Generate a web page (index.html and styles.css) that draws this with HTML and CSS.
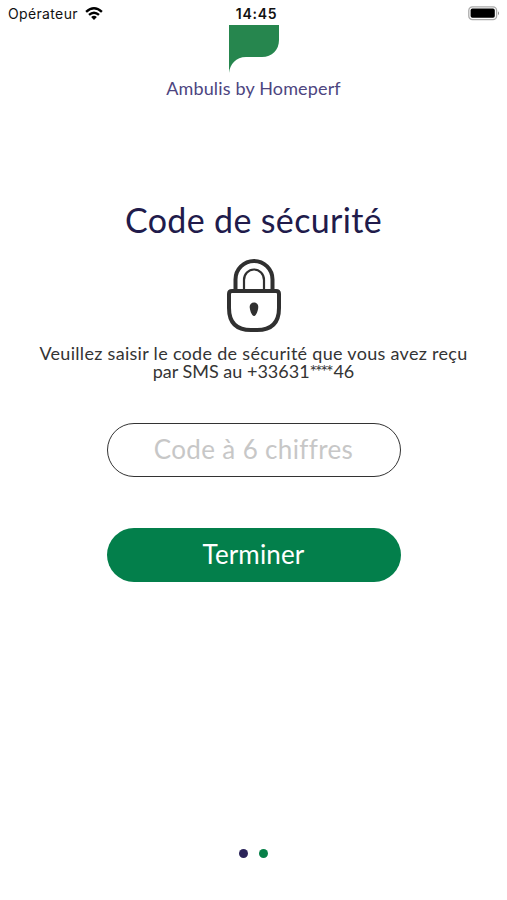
FILE: index.html
```html
<!DOCTYPE html>
<html lang="fr">
<head>
<meta charset="utf-8">
<title>Code de sécurité</title>
<link rel="stylesheet" href="styles.css">
</head>
<body>
<div class="screen">
  <header class="status">
    <div class="carrier"><span class="carrier-name">Opérateur</span>
      <svg class="wifi" viewBox="0 0 18 13" width="18" height="13"><g fill="none" stroke="#000" stroke-width="2.4"><path d="M1.1 4.9Q9-2.3 16.9 4.9"/><path d="M4 7.9Q9 3.5 14 7.9"/></g><path d="M6.1 10Q9 7.6 11.9 10L9 12.9Z"/></svg>
    </div>
    <time class="clock">14:45</time>
    <svg class="battery" viewBox="0 0 32 15" width="32" height="15"><rect x=".8" y=".8" width="27.8" height="12.8" rx="3.6" fill="#fff" stroke="#aaa" stroke-width="1.3"/><rect x="2.6" y="2.6" width="24.2" height="9.2" rx="1.8"/><path d="M30 5.2Q32 7.2 30 9.2Z" fill="#888"/></svg>
  </header>
  <main class="content">
    <svg class="logo" viewBox="0 0 50 48" width="50" height="48"><path d="M0 0H50V15C50 25 43 32 33 32H17C7 32 1 39 0 48Z" fill="#26864e"/></svg>
    <p class="brand">Ambulis by Homeperf</p>
    <h1 class="title">Code de sécurité</h1>
    <svg class="lock" viewBox="0 0 56 74" width="56" height="74"><g fill="none" stroke="#303030"><path d="M9.5 31V20.5a18.5 18.5 0 0 1 37 0V31" stroke-width="4"/><path d="M18 31V21a10 10.5 0 0 1 20 0V31" stroke-width="2.2"/><path d="M6 32H50Q53 32 53 35V49Q53 71 31 71H25Q3 71 3 49V35Q3 32 6 32Z" stroke-width="4"/></g><path d="M28 43.5C25.5 43.5 23.7 45.3 23.7 47.7C23.7 50.5 25.6 57 28 57S32.3 50.5 32.3 47.7C32.3 45.3 30.5 43.5 28 43.5Z" fill="#303030"/></svg>
    <div class="message"><p class="line-one">Veuillez saisir le code de sécurité que vous avez reçu</p><p class="line-two">par SMS au +33631<span class="mask">****</span>46</p></div>
    <input class="code" type="text" inputmode="numeric" maxlength="6" placeholder="Code à 6 chiffres" aria-label="Code à 6 chiffres">
    <button class="submit" type="button">Terminer</button>
  </main>
  <footer class="pager"><i class="dot"></i><i class="dot active"></i></footer>
</div>
</body>
</html>
```
FILE: styles.css
```css
* { box-sizing: border-box; }
body { margin: 0; background: #fff; font-family: Lato, sans-serif; }
.screen { height: 900px; display: flex; flex-direction: column; overflow: hidden; }
.status {
  height: 25px; padding: 0 7px 0 8px; flex: none;
  display: grid; grid-template-columns: 1fr auto 1fr; align-items: center;
  font-family: Inter, sans-serif; color: #111;
}
.carrier { display: flex; align-items: center; gap: 7px; padding-top: 2px; }
.carrier-name { font-size: 14px; letter-spacing: .35px; }
.wifi { margin-bottom: 1px; }
.clock { font-size: 14px; font-weight: 600; letter-spacing: .7px; padding: 2px 0 0 5px; }
.battery { justify-self: end; margin-top: 2px; }
.content { flex: 1; display: flex; flex-direction: column; align-items: center; }
.logo { flex: none; }
.brand { margin: 3px 0 0; font-size: 18px; line-height: 24px; color: #4d4580; letter-spacing: .15px; }
.title { margin: 98px 0 0; font-size: 34px; line-height: 44px; font-weight: 400; color: #211b4b; letter-spacing: .35px; }
.lock { flex: none; margin-top: 17px; }
.message { margin-top: 11px; font-size: 18px; line-height: 18px; text-align: center; color: #343434; white-space: nowrap; }
.message p { margin: 0; }
.line-one { letter-spacing: .3px; }
.mask { letter-spacing: -2.2px; margin-right: 2px; }
.code, .submit { width: 294px; height: 54px; border-radius: 27px; font-family: inherit; font-size: 26px; text-align: center; }
.code { margin-top: 43px; padding: 0 0 2px; border: 1.5px solid #333; background: #fff; color: #333; letter-spacing: .35px; }
.code::placeholder { color: #c7c7c7; opacity: 1; }
.submit { margin-top: 51px; padding: 0 0 3px; border: 0; background: #037f4b; color: #fff; letter-spacing: .15px; }
.pager { flex: none; display: flex; justify-content: center; gap: 11px; height: 51px; }
.dot { width: 9px; height: 9px; border-radius: 50%; background: #2b2459; }
.dot.active { background: #078048; }
```
